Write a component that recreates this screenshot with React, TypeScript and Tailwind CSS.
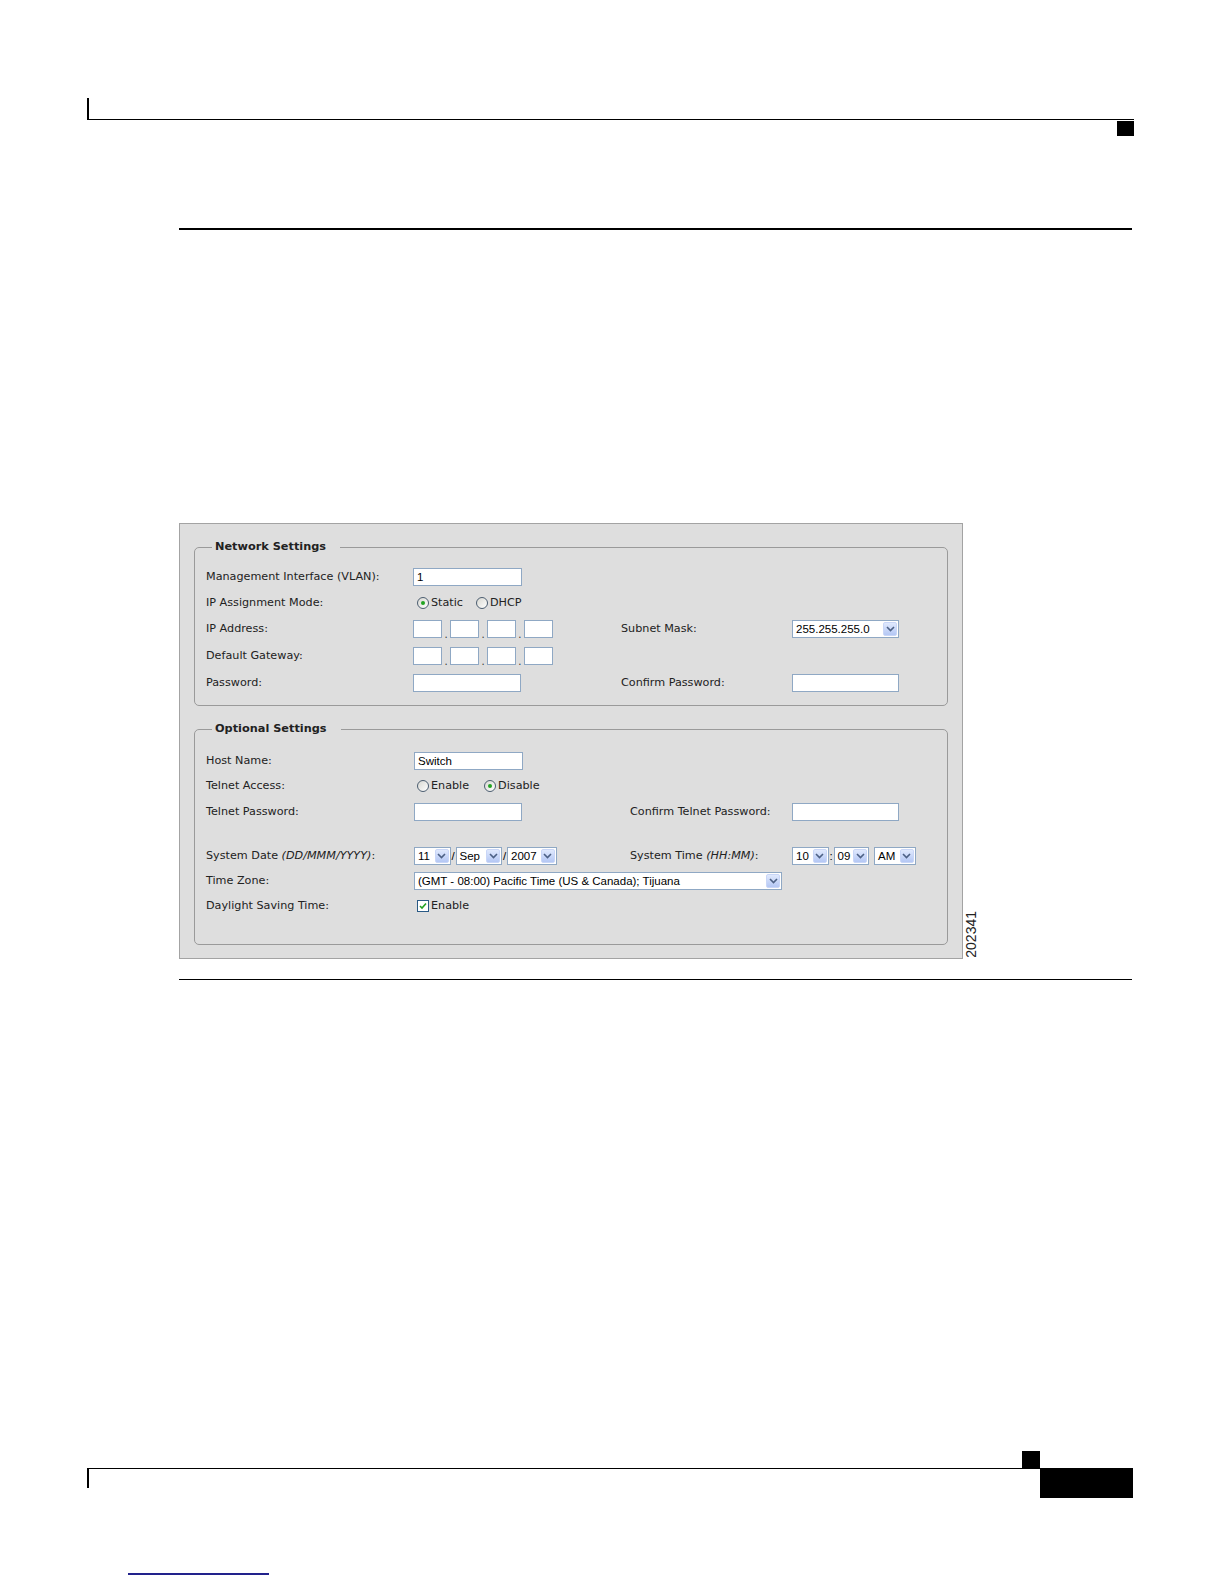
import React from "react";
import clsx from "clsx";

const label = "font-['DejaVu_Sans',Verdana,sans-serif] text-[11.2px] leading-[14px] text-[#222]";
const value = "font-['Liberation_Sans',Arial,sans-serif] text-[11.5px] leading-[14px] text-black";

const Chevron = () => (
  <svg width="9" height="6" viewBox="0 0 9 6">
    <path d="M1 1 L4.5 4.5 L8 1" fill="none" stroke="#4d6185" strokeWidth="1.6" />
  </svg>
);

function Select({ text, w }: { text: string; w: string }) {
  return (
    <div className={clsx("h-[18px] border border-[#8fa8c4] bg-white flex items-center justify-between pl-[3px] pr-[1px]", w)}>
      <span className={clsx(value, "whitespace-nowrap")}>{text}</span>
      <span className="w-[14px] h-[14px] shrink-0 rounded-[2px] border border-[#c9d6f7] bg-linear-to-b from-[#e0e9fd] to-[#b4c7f4] flex items-center justify-center">
        <Chevron />
      </span>
    </div>
  );
}

function TextBox({ w, text }: { w: string; text?: string }) {
  return (
    <div className={clsx("h-[18px] border border-[#8fa8c4] bg-white flex items-center pl-[3px]", w)}>
      {text && <span className={value}>{text}</span>}
    </div>
  );
}

function Radio({ checked, text }: { checked?: boolean; text: string }) {
  return (
    <span className="flex items-center">
      <span className="w-[12px] h-[12px] rounded-full border border-[#4b5d70] bg-linear-to-br from-[#d8d8d2] to-white flex items-center justify-center">
        {checked && <span className="w-[4px] h-[4px] rounded-full bg-[#22a322]" />}
      </span>
      <span className={clsx(label, "ml-[2px]")}>{text}</span>
    </span>
  );
}

function Checkbox({ text }: { text: string }) {
  return (
    <span className="flex items-center">
      <span className="w-[12px] h-[12px] border border-[#2a5a85] bg-white flex items-center justify-center">
        <svg width="8" height="8" viewBox="0 0 8 8">
          <path d="M1 4 L3 6 L7 1.5" fill="none" stroke="#21a121" strokeWidth="1.6" />
        </svg>
      </span>
      <span className={clsx(label, "ml-[2px]")}>{text}</span>
    </span>
  );
}

function IpBoxes() {
  return (
    <div className="flex items-end">
      {[0, 1, 2, 3].map((i) => (
        <React.Fragment key={i}>
          {i > 0 && <span className="w-[7.6px] text-center text-[10px] leading-[8px] text-[#333]">.</span>}
          <span className="w-[29.3px] h-[18px] border border-[#8fa8c4] bg-white" />
        </React.Fragment>
      ))}
    </div>
  );
}

function Legend({ children }: { children: React.ReactNode }) {
  return (
    <legend className="ml-[6px] pl-[3px] pr-[14px] font-['DejaVu_Sans',Verdana,sans-serif] font-bold text-[11.3px] leading-[14px] text-[#222]">
      {children}
    </legend>
  );
}

export default function App() {
  return (
    <div className="w-[1224px] h-[1584px] bg-white flex flex-col overflow-hidden">
      {/* page header */}
      <div className="pt-[98px] pl-[87px]">
        <div className="w-[1047px] h-[22px] border-l-2 border-b border-black" />
        <div className="w-[1047px] flex justify-end">
          <div className="w-[17px] h-[15px] mt-[1px] bg-black" />
        </div>
      </div>

      <div className="ml-[179px] mt-[92px] w-[953px] h-[2px] bg-black" />

      {/* figure */}
      <div className="ml-[179px] mt-[293px] flex">
        <div className="w-[784px] border border-[#a3a3a3] bg-[#dedede] pt-[16px] pb-[13px] px-[14px]">
          <fieldset className="border border-[#9a9a9a] rounded-[5px] px-[11px] pt-[10px] pb-[9px]">
            <Legend>Network Settings</Legend>
            <div className="flex items-center h-[26px]">
              <span className={clsx(label, "w-[207px]")}>Management Interface (VLAN):</span>
              <TextBox w="w-[109px]" text="1" />
            </div>
            <div className="flex items-center h-[26px]">
              <span className={clsx(label, "w-[207px]")}>IP Assignment Mode:</span>
              <div className="flex items-center gap-[13px] ml-[4px]">
                <Radio checked text="Static" />
                <Radio text="DHCP" />
              </div>
            </div>
            <div className="flex items-center h-[26px]">
              <span className={clsx(label, "w-[207px]")}>IP Address:</span>
              <div className="w-[208px]">
                <IpBoxes />
              </div>
              <span className={clsx(label, "w-[171px]")}>Subnet Mask:</span>
              <Select w="w-[107px]" text="255.255.255.0" />
            </div>
            <div className="flex items-center h-[27px]">
              <span className={clsx(label, "w-[207px]")}>Default Gateway:</span>
              <IpBoxes />
            </div>
            <div className="flex items-center h-[27px]">
              <span className={clsx(label, "w-[207px]")}>Password:</span>
              <div className="w-[208px]">
                <TextBox w="w-[108px]" />
              </div>
              <span className={clsx(label, "w-[171px]")}>Confirm Password:</span>
              <TextBox w="w-[107px]" />
            </div>
          </fieldset>

          <fieldset className="mt-[16px] border border-[#9a9a9a] rounded-[5px] px-[11px] pt-[12px] pb-[26px]">
            <Legend>Optional Settings</Legend>
            <div className="flex items-center h-[25px]">
              <span className={clsx(label, "w-[208px]")}>Host Name:</span>
              <TextBox w="w-[109px]" text="Switch" />
            </div>
            <div className="flex items-center h-[26px]">
              <span className={clsx(label, "w-[208px]")}>Telnet Access:</span>
              <div className="flex items-center gap-[15px] ml-[3px]">
                <Radio text="Enable" />
                <Radio checked text="Disable" />
              </div>
            </div>
            <div className="flex items-center h-[25px]">
              <span className={clsx(label, "w-[208px]")}>Telnet Password:</span>
              <div className="w-[216px]">
                <TextBox w="w-[108px]" />
              </div>
              <span className={clsx(label, "w-[162px]")}>Confirm Telnet Password:</span>
              <TextBox w="w-[107px]" />
            </div>
            <div className="h-[19px]" />
            <div className="flex items-center h-[25px]">
              <span className={clsx(label, "w-[208px]")}>
                System Date <i>(DD/MMM/YYYY)</i>:
              </span>
              <div className="w-[216px] flex items-center">
                <Select w="w-[36.5px]" text="11" />
                <span className={clsx(value, "w-[5px] text-center")}>/</span>
                <Select w="w-[46.5px]" text="Sep" />
                <span className={clsx(value, "w-[5px] text-center")}>/</span>
                <Select w="w-[49.5px]" text="2007" />
              </div>
              <span className={clsx(label, "w-[162px]")}>
                System Time <i>(HH:MM)</i>:
              </span>
              <div className="flex items-center">
                <Select w="w-[36.5px]" text="10" />
                <span className={clsx(value, "w-[5px] text-center")}>:</span>
                <Select w="w-[35.5px]" text="09" />
                <span className="w-[5px]" />
                <Select w="w-[41.5px]" text="AM" />
              </div>
            </div>
            <div className="flex items-center h-[25px]">
              <span className={clsx(label, "w-[208px]")}>Time Zone:</span>
              <Select w="w-[368px]" text="(GMT - 08:00) Pacific Time (US & Canada); Tijuana" />
            </div>
            <div className="flex items-center h-[25px]">
              <span className={clsx(label, "w-[208px]")}>Daylight Saving Time:</span>
              <div className="ml-[3px]">
                <Checkbox text="Enable" />
              </div>
            </div>
          </fieldset>
        </div>
        <span className="self-end ml-[1px] mb-[1px] [writing-mode:vertical-rl] rotate-180 font-['Liberation_Sans',Arial,sans-serif] text-[14px] leading-[14px] text-[#222]">
          202341
        </span>
      </div>

      <div className="ml-[179px] mt-[20px] w-[953px] h-[1px] bg-black" />

      {/* page footer */}
      <div className="ml-[87px] mt-[471px] flex items-start">
        <div className="w-[953px]">
          <div className="flex justify-end">
            <div className="w-[18px] h-[17px] bg-black" />
          </div>
          <div className="h-[20px] border-l-2 border-t border-black" />
        </div>
        <div className="w-[93px] h-[30px] mt-[17px] bg-black" />
      </div>

      <div className="ml-[128px] mt-[75px] w-[141px] h-[2px] bg-[#22228c]" />
    </div>
  );
}
